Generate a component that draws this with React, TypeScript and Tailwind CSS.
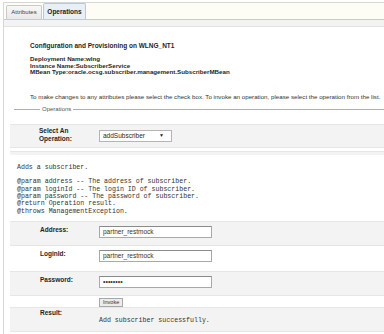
export default function App() {
  const sans = "font-['Liberation_Sans',Arial,sans-serif]";
  const mono = "font-['Liberation_Mono','Courier_New',monospace]";

  return (
    <div className={`h-[334px] w-[384px] overflow-hidden bg-white text-[#1f1f1f] ${sans}`}>
      <div className="ml-[3px] mt-[2px] h-[332px] border-l border-t border-[#d6d6d6]">
        {/* Tabs */}
        <div className="flex h-[17px] items-end gap-[1px] border-b border-[#c2ccd5] bg-[#fdfdf6] pl-[2px]">
          <div className="flex h-[14px] w-[36px] items-center justify-center rounded-t-[2px] border border-b-0 border-[#c9c9c9] bg-gradient-to-b from-[#f7f7f7] to-[#e9e9e9] text-[6px] text-[#444]">
            Attributes
          </div>
          <div className="flex h-[16px] w-[43px] items-center justify-center rounded-t-[2px] border border-b-0 border-[#b9c8d4] bg-[#e8f0f6] text-[6.5px] font-bold text-[#222]">
            Operations
          </div>
        </div>
        <div className="h-[7px] border-b border-[#e2e2e2] bg-[#f3f3f3]" />

        {/* Header info */}
        <div className="pl-[26px] font-bold">
          <div className="mt-[15px] text-[6.5px] leading-[8px]">Configuration and Provisioning on WLNG_NT1</div>
          <div className="mt-[6px] text-[6.2px] leading-[6.6px]">
            <div>Deployment Name:wlng</div>
            <div>Instance Name:SubscriberService</div>
            <div>MBean Type:oracle.ocsg.subscriber.management.SubscriberMBean</div>
          </div>
        </div>
        <div className="mt-[17px] whitespace-nowrap pl-[26px] text-[6.2px] leading-[8px] text-[#333]">
          To make changes to any attributes please select the check box. To invoke an operation, please select the operation from the list.
        </div>

        {/* Fieldset legend */}
        <div className="ml-[10px] mt-[5px] flex h-[8px] items-center">
          <div className="h-px w-[26px] bg-[#9db3cc]" />
          <span className="px-[2px] text-[6px] text-[#555]">Operations</span>
          <div className="h-px flex-1 bg-[#9db3cc]" />
        </div>

        {/* Select operation */}
        <div className="ml-[6px] mt-[10px] flex h-[24px] border-y border-[#e6e6e6] bg-[#f3f3f3]">
          <div className="w-[89px] pl-[29px] pt-[2px] text-[6.5px] font-bold leading-[8px]">
            <div>Select An</div>
            <div>Operation:</div>
          </div>
          <div className="mt-[5px] flex h-[12px] w-[73px] items-center justify-between border border-[#b5b5b5] bg-white pl-[3px] pr-[7px] text-[6.5px]">
            <span>addSubscriber</span>
            <span className="text-[5px]">▼</span>
          </div>
        </div>
        <div className="ml-[6px] mt-[3px] h-[4px] border-t border-[#e6e6e6] bg-[#f3f3f3]" />

        {/* Description */}
        <pre className={`mt-[9px] pl-[13px] text-[6.6px] leading-[7.3px] text-[#333] ${mono}`}>
{`Adds a subscriber.

@param address -- The address of subscriber.
@param loginId -- The login ID of subscriber.
@param password -- The password of subscriber.
@return Operation result.
@throws ManagementException.`}
        </pre>

        {/* Parameters */}
        <div className="ml-[6px] mt-[6px]">
          <ParamRow label="Address:" value="partner_restmock" shaded />
          <ParamRow label="LoginId:" value="partner_restmock" />
          <ParamRow label="Password:" value="••••••••" shaded password />
          <div className="flex h-[11px] items-end">
            <div className="w-[89px]" />
            <button className="h-[9px] border border-[#a8a8a8] bg-[#ececec] px-[3px] text-[5.5px] leading-[7px] text-[#333]">
              Invoke
            </button>
          </div>
          <div className="flex h-[25px] border-y border-[#e6e6e6] bg-[#f3f3f3]">
            <div className="w-[89px] pl-[30px] pt-[1px] text-[6.5px] font-bold leading-[8px]">Result:</div>
            <div className={`pt-[9px] text-[6.6px] leading-[8px] text-[#333] ${mono}`}>
              Add subscriber successfully.
            </div>
          </div>
        </div>
      </div>
    </div>
  );
}

function ParamRow({
  label,
  value,
  shaded,
  password,
}: {
  label: string;
  value: string;
  shaded?: boolean;
  password?: boolean;
}) {
  return (
    <div
      className={`flex h-[25px] ${shaded ? "border-y border-[#e6e6e6] bg-[#f3f3f3]" : "bg-white"}`}
    >
      <div className="w-[89px] pl-[30px] pt-[4px] text-[6.5px] font-bold leading-[8px]">{label}</div>
      <div
        className={`mt-[4px] flex h-[12px] w-[113px] items-center border border-[#a9a9a9] border-t-[#8a8a8a] bg-white pl-[3px] text-[#333] ${
          password ? "text-[7px]" : "text-[6.5px]"
        }`}
      >
        {value}
      </div>
    </div>
  );
}
